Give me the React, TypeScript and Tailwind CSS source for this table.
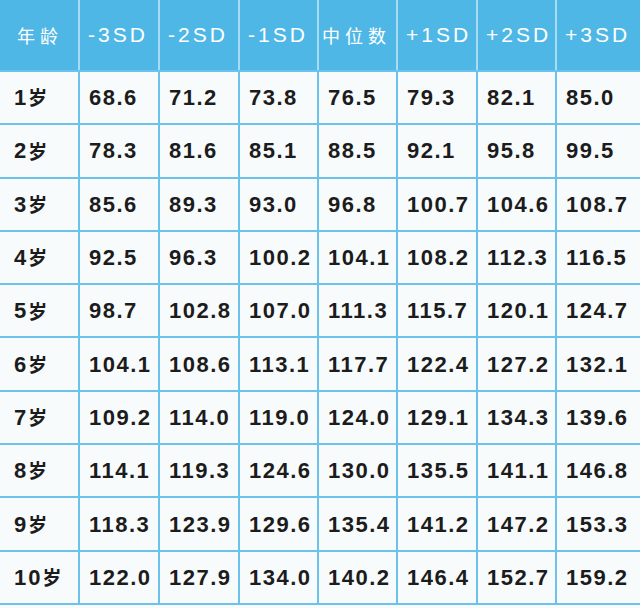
const headers = ["年龄", "-3SD", "-2SD", "-1SD", "中位数", "+1SD", "+2SD", "+3SD"];

const rows: [string, string[]][] = [
  ["1", ["68.6", "71.2", "73.8", "76.5", "79.3", "82.1", "85.0"]],
  ["2", ["78.3", "81.6", "85.1", "88.5", "92.1", "95.8", "99.5"]],
  ["3", ["85.6", "89.3", "93.0", "96.8", "100.7", "104.6", "108.7"]],
  ["4", ["92.5", "96.3", "100.2", "104.1", "108.2", "112.3", "116.5"]],
  ["5", ["98.7", "102.8", "107.0", "111.3", "115.7", "120.1", "124.7"]],
  ["6", ["104.1", "108.6", "113.1", "117.7", "122.4", "127.2", "132.1"]],
  ["7", ["109.2", "114.0", "119.0", "124.0", "129.1", "134.3", "139.6"]],
  ["8", ["114.1", "119.3", "124.6", "130.0", "135.5", "141.1", "146.8"]],
  ["9", ["118.3", "123.9", "129.6", "135.4", "141.2", "147.2", "153.3"]],
  ["10", ["122.0", "127.9", "134.0", "140.2", "146.4", "152.7", "159.2"]],
];

const cols = "grid grid-cols-[80px_80px_80px_79px_79px_80px_79px_1fr]";

export default function App() {
  return (
    <div className="w-[640px] h-[608px] bg-[#f8fbfc] overflow-hidden font-['Liberation_Sans','Noto_Sans_CJK_SC',sans-serif]">
      <div className={`${cols} h-[72px] bg-[#4fb7e6] border-b-2 border-[#6cc2ea]`}>
        {headers.map((h, i) => (
          <div
            key={h}
            className={`flex items-center whitespace-nowrap overflow-hidden text-white ${
              i < 7 ? "border-r-2 border-[#a8dcf2]" : ""
            } ${i === 0 ? "pl-[17px]" : i === 4 ? "pl-[3px]" : "pl-[8px]"}`}
          >
            {/[A-Z]/.test(h) ? (
              <span className="text-[21px] tracking-[3px]">{h}</span>
            ) : (
              <span className="text-[18px] tracking-[5px] font-['Noto_Sans_CJK_SC',sans-serif]">{h}</span>
            )}
          </div>
        ))}
      </div>
      {rows.map(([age, vals]) => (
        <div key={age} className={`${cols} h-[53.3px] border-b-2 border-[#6cc2ea]`}>
          <div className="flex items-center pl-[14px] border-r-2 border-[#6cc2ea] text-[#1c1c1c]">
            <span className="text-[22px] font-bold tracking-[2px]">{age}</span>
            <span className="text-[19px] font-bold font-['Noto_Sans_CJK_SC',sans-serif]">岁</span>
          </div>
          {vals.map((v, i) => (
            <div
              key={i}
              className={`flex items-center pl-[9px] text-[22px] font-bold tracking-[1.5px] text-[#1c1c1c] ${
                i < 6 ? "border-r-2 border-[#6cc2ea]" : ""
              }`}
            >
              {v}
            </div>
          ))}
        </div>
      ))}
    </div>
  );
}
